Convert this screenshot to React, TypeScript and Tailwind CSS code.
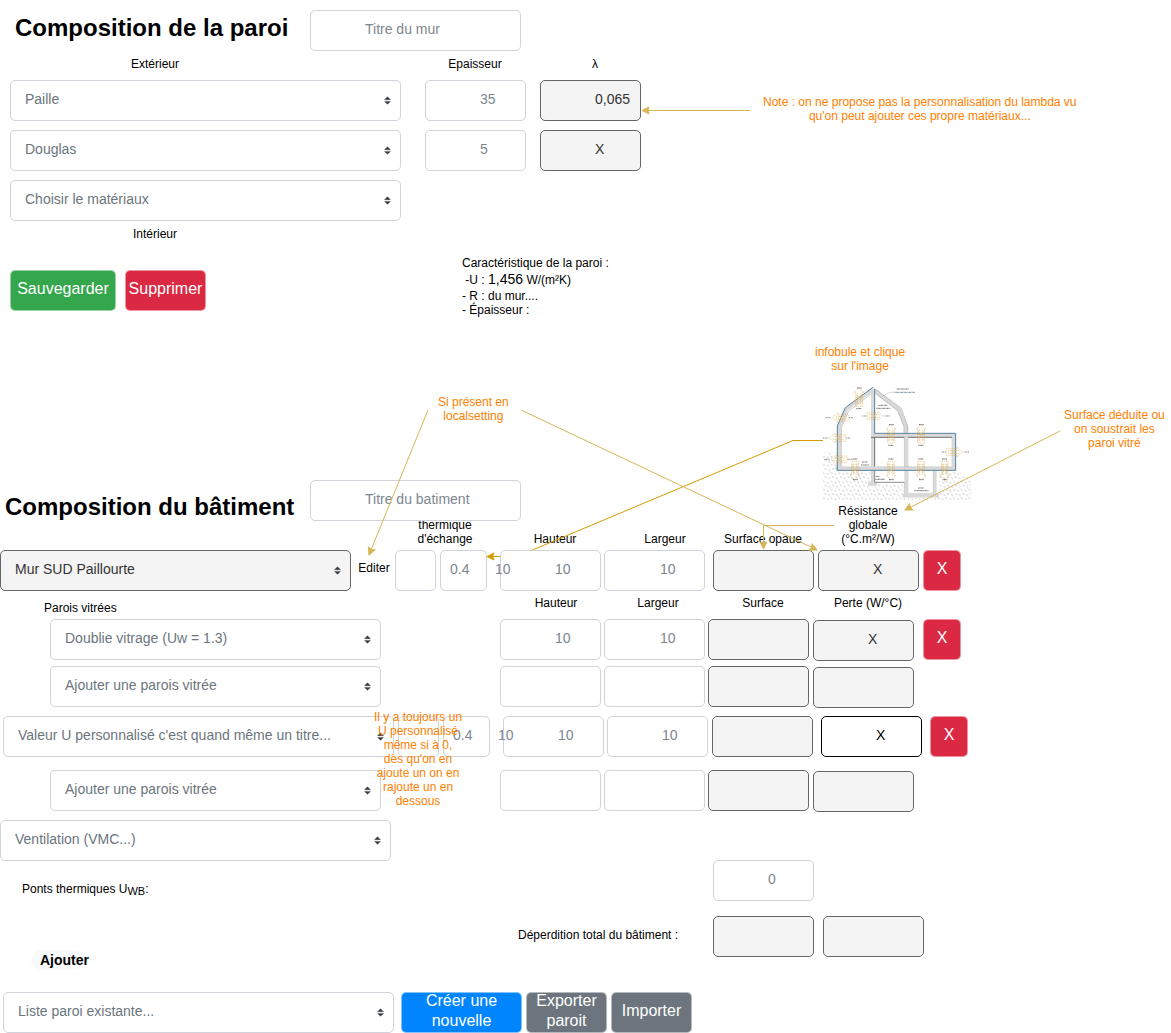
import React from "react";

const rose = "#D6B656";
const amber = "#D79B00";

function Caret() {
  return (
    <svg
      className="pointer-events-none absolute right-[10px] top-[16px] h-[9px] w-[7px]"
      viewBox="0 0 4 5"
      aria-hidden="true"
    >
      <path d="M2 .3 .3 2h3.4zM2 4.7.3 3h3.4z" fill="#343A40" stroke="#343A40" strokeWidth=".2" strokeLinejoin="round" />
    </svg>
  );
}

function Choice({ label, options, className = "", dark = false }: { label: string; options: string[]; className?: string; dark?: boolean }) {
  return (
    <div className={"relative h-[41px] shrink-0 " + className}>
      <select
        aria-label={label}
        className={
          "h-full w-full appearance-none rounded-[5px] border pb-1 pl-[14px] pr-6 text-sm " +
          (dark ? "border-[#666] bg-[#f4f4f4] text-[#333]" : "border-[#CED4DA] bg-white text-[#6C757D]")
        }
      >
        {options.map((o) => (
          <option key={o}>{o}</option>
        ))}
      </select>
      <Caret />
    </div>
  );
}

type Tone = "light" | "dark" | "black";

const tones: Record<Tone, string> = {
  light: "border-[#CED4DA] bg-white text-[#7D868E]",
  dark: "border-[#666] bg-[#f4f4f4] text-[#333]",
  black: "border-black bg-white text-black",
};

function Field({ label, id, value = "", tone = "light", className = "w-[101px] pl-[54px]" }: { label?: string; id?: string; value?: string; tone?: Tone; className?: string }) {
  return (
    <input
      id={id}
      aria-label={label}
      defaultValue={value}
      readOnly={tone !== "light"}
      className={"relative z-10 h-[41px] shrink-0 rounded-[5px] border pb-1 text-sm " + tones[tone] + " " + className}
    />
  );
}

function Action({ children, className }: { children: React.ReactNode; className: string }) {
  return (
    <button
      type="button"
      className={"relative z-10 flex h-[41px] shrink-0 items-center justify-center rounded-[5px] border bg-clip-padding pb-1 text-center text-base leading-5 text-white " + className}
    >
      {children}
    </button>
  );
}

const red = "border-[#DB2843]/50 bg-[#DB2843]";

function Note({ children, className }: { children: React.ReactNode; className: string }) {
  return <p className={"absolute z-20 whitespace-pre text-center leading-[14px] text-[#FF8000] " + className}>{children}</p>;
}

function Exchange({ className = "" }: { className?: string }) {
  return (
    <div className={"relative flex gap-[4px] " + className}>
      <Field label="Personnalisé" className="w-[41px]" />
      <Field label="Coefficient thermique d'échange" value="0.4" className="w-[47px] pl-[9px]" />
      <span className="absolute left-[100px] top-[9px] z-20 text-sm text-[#7D868E]">10</span>
    </div>
  );
}

function GlassRow({ option, filled = false, className = "" }: { option: string; filled?: boolean; className?: string }) {
  return (
    <div className={"flex items-start pl-[50px] " + className}>
      <Choice label="Paroi vitrée" options={[option]} className="w-[331px]" />
      <div className="ml-[119px] flex gap-[3px]">
        <Field label="Hauteur" value={filled ? "10" : ""} />
        <Field label="Largeur" value={filled ? "10" : ""} className="w-[101px] pl-[55px]" />
        <Field label="Surface" tone="dark" />
      </div>
      <div className="ml-[4px] mt-px">
        <Field label="Perte" tone="dark" value={filled ? "X" : ""} />
      </div>
      {filled && <Action className={"ml-[9px] w-[38px] " + red}>X</Action>}
    </div>
  );
}

function VArrow({ x, y, flip = false }: { x: number; y: number; flip?: boolean }) {
  return (
    <g transform={`translate(${x} ${y})${flip ? " scale(1 -1)" : ""}`}>
      <path d="M-10-24V18H-15L0 32 15 18H10V-24zM-5-18V16M5-18V16M-11-14H11M-10 2H10" fill="none" stroke="#D9A441" strokeWidth="2" strokeDasharray="4 2" opacity=".7" />
      <path d="M-8-10 8 12M8-10-8 12" stroke="#E3C27C" strokeWidth="2" />
      <path d="M-8-31H7M-6 31H8" stroke="#333" strokeWidth="3" strokeDasharray="3 1" opacity=".75" />
    </g>
  );
}

function HArrow({ x, y, flip = false }: { x: number; y: number; flip?: boolean }) {
  return (
    <g transform={`translate(${x} ${y})${flip ? " scale(-1 1)" : ""}`}>
      <path d="M22-10H-10V-15L-26 0-10 15V10H22zM-16-4H18M-16 4H18" fill="none" stroke="#D9A441" strokeWidth="2" strokeDasharray="4 2" opacity=".7" />
      <path d="M-9-7 9 7M9-7-9 7" stroke="#E3C27C" strokeWidth="2" />
      <path d="M-46 0H-30M24 0H36" stroke="#333" strokeWidth="3" strokeDasharray="3 2" opacity=".65" />
    </g>
  );
}

function House() {
  return (
    <svg className="absolute left-[815px] top-[380px] h-[125px] w-[160px]" viewBox="0 0 480 375" role="img" aria-label="Coupe du bâtiment">
      <defs>
        <pattern id="soil" width="23" height="25" patternUnits="userSpaceOnUse">
          <path d="M2 2l3 5M14 5l3 5M7 14l3 5M19 18l3 5" stroke="#999" strokeWidth="2" />
        </pattern>
      </defs>
      <path d="M24 218H66V272H170V312H265V352H372V272H422L468 300V360H24z" fill="url(#soil)" />
      <g fill="none" stroke="#D9D9D9" strokeWidth="10">
        <path d="M174 28 94 88 73 140V266H417V166H174M174 28 252 88 273 140V346M173 28V312M360 272V346" />
        <path d="M262 347H372M159 312H187" strokeWidth="11" />
        <path d="M61 266H70" />
      </g>
      <g fill="none" stroke="#555" strokeWidth="2.5">
        <path d="M168 172H268M279 172H411M179 172V260" />
        <path d="M179 272V307H268" strokeWidth="2" />
        <path d="M268 172V260M268 307V340M279 172V260M279 272V340H355V272M411 172V260M79 260H168M184 260H411" strokeWidth="1" stroke="#999" />
        <path d="M181 40 248 92 267 140V158M182 28 258 84 278 138V158" strokeWidth="1.5" stroke="#888" />
        <path d="M168 42 100 94 79 142V260" strokeWidth="1.5" stroke="#999" />
      </g>
      <path d="M174 22 91 83 67 138V271H422V160H179V26" fill="none" stroke="#54809F" strokeWidth="3" />
      <g stroke="#333" strokeWidth="3" strokeDasharray="3 1" opacity=".7">
        <path d="M245 27H282M190 76H218M184 85H226M141 246H158M138 255H162M182 289H194M181 298H210M309 324H326M298 332H340" />
        <path d="M238 37H300" stroke="#34566F" />
      </g>
      <path d="M205 47 222 38 238 36" fill="none" stroke="#777" strokeWidth="1.5" strokeDasharray="3 3" />
      <VArrow x={132} y={55} flip />
      <VArrow x={228} y={165} flip />
      <VArrow x={318} y={165} flip />
      <VArrow x={120} y={268} />
      <VArrow x={228} y={268} />
      <VArrow x={318} y={268} />
      <VArrow x={389} y={268} />
      <HArrow x={78} y={113} />
      <HArrow x={178} y={108} flip />
      <HArrow x={70} y={174} />
      <HArrow x={74} y={238} />
      <HArrow x={416} y={216} flip />
    </svg>
  );
}

function Arrows() {
  return (
    <>
      <svg className="pointer-events-none absolute left-0 top-0 h-[600px] w-[1171px]" viewBox="0 0 1171 600" aria-hidden="true">
        <path d="M823 440.500H793L517 556.500H492" fill="none" stroke={amber} />
        <path d="M487 556.500l7-3.500-1.500 3.500 1.500 3.500z" fill={amber} stroke={amber} />
      </svg>
      <svg className="pointer-events-none absolute left-0 top-0 z-20 h-[600px] w-[1171px]" viewBox="0 0 1171 600" aria-hidden="true">
        <g fill="none" stroke={rose}>
          <path d="M750 110.500H647" />
          <path d="M428 410 371 550" />
          <path d="M521 410 813 548" />
          <path d="M834 525.500H763.500V545" />
          <path d="M1060 431 909 508" />
        </g>
        <g fill={rose} stroke={rose}>
          <path d="M642 110.500l7-3.500-1 3.500 1 3.500z" />
          <path d="M0 0l7-3.500-1 3.500 1 3.500z" transform="translate(369 555) rotate(-68)" />
          <path d="M0 0l7-3.500-1 3.500 1 3.500z" transform="translate(817 550) rotate(205)" />
          <path d="M0 0l7-3.500-1 3.500 1 3.500z" transform="translate(763.5 549) rotate(-90)" />
          <path d="M0 0l7-3.500-1 3.500 1 3.500z" transform="translate(905 510) rotate(-27)" />
        </g>
      </svg>
    </>
  );
}

export default function App() {
  return (
    <main className="relative min-h-screen overflow-hidden bg-white font-['Liberation_Sans',Arial,sans-serif] text-xs text-black">
      <section className="pt-[10px]">
        <div className="flex items-center pl-[15px]">
          <h1 className="w-[295px] pb-1.5 text-2xl font-bold">Composition de la paroi</h1>
          <Field label="Titre du mur" value="Titre du mur" className="w-[211px] pl-[54px]" />
        </div>
        <div className="flex h-[29px] items-center pb-1 pl-[10px] text-center">
          <span className="w-[290px]">Extérieur</span>
          <span className="ml-[115px] w-[120px]">Epaisseur</span>
          <span className="w-[120px]">λ</span>
        </div>
        <div className="flex flex-col gap-[9px] pl-[10px]">
          <div className="flex">
            <Choice label="Matériau 1" options={["Paille"]} className="w-[391px]" />
            <div className="ml-6 flex gap-[14px]">
              <Field label="Epaisseur" value="35" />
              <Field label="Lambda" value="0,065" tone="dark" />
            </div>
          </div>
          <div className="flex">
            <Choice label="Matériau 2" options={["Douglas"]} className="w-[391px]" />
            <div className="ml-6 flex gap-[14px]">
              <Field label="Epaisseur" value="5" />
              <Field label="Lambda" value="X" tone="dark" />
            </div>
          </div>
          <Choice label="Matériau 3" options={["Choisir le matériaux"]} className="w-[391px]" />
        </div>
        <div className="flex h-[96px] pl-[10px]">
          <div className="w-[452px]">
            <p className="w-[290px] pt-1 text-center leading-[18px]">Intérieur</p>
            <div className="mt-[27px] flex gap-[9px]">
              <Action className="w-[106px] border-[#34A64C]/50 bg-[#34A64C]">Sauvegarder</Action>
              <Action className={"w-[81px] " + red}>Supprimer</Action>
            </div>
          </div>
          <div className="whitespace-pre pt-[35px] leading-[14px]">
            <p>Caractéristique de la paroi :</p>
            <p className="leading-[18px]">
              {" "}-U : <span className="text-sm leading-[18px]">1,456</span> W/(m²K)
            </p>
            <p>- R : du mur....</p>
            <p>- Épaisseur :</p>
          </div>
        </div>
      </section>

      <section className="pt-[163px]">
        <div className="flex items-end pl-[5px]">
          <h2 className="w-[305px] text-2xl leading-7 font-bold">Composition du bâtiment</h2>
          <Field label="Titre du batiment" value="Titre du batiment" className="w-[211px] pl-[54px]" />
        </div>
        <div className="flex h-[29px] items-end pb-1 pl-[390px] text-center leading-[14px]">
          <span className="w-[110px]">thermique<br />d'échange</span>
          <span className="w-[110px]">Hauteur</span>
          <span className="w-[110px]">Largeur</span>
          <span className="w-[86px]">Surface opaue</span>
          <span className="w-[124px]">Résistance<br />globale<br />(°C.m²/W)</span>
        </div>
        <div className="flex">
          <Choice dark label="Paroi" options={["Mur SUD Paillourte"]} className="w-[351px]" />
          <a href="#editer" className="w-[44px] pl-[2px] text-center leading-[37px]">Editer</a>
          <Exchange />
          <div className="ml-[13px] flex gap-[3px]">
            <Field label="Hauteur" value="10" />
            <Field label="Largeur" value="10" className="w-[101px] pl-[55px]" />
          </div>
          <div className="ml-[8px] flex gap-[4px]">
            <Field label="Surface opaque" tone="dark" />
            <Field label="Résistance globale" tone="dark" value="X" />
            <Action className={"w-[38px] " + red}>X</Action>
          </div>
        </div>
        <div className="flex h-[28px] items-center pb-1 pl-[44px] text-center">
          <span className="w-[456px] pt-2.5 text-left">Parois vitrées</span>
          <span className="w-[112px]">Hauteur</span>
          <span className="w-[92px]">Largeur</span>
          <span className="w-[118px]">Surface</span>
          <span className="w-[92px]">Perte (W/°C)</span>
        </div>
        <GlassRow filled option="Doublie vitrage (Uw = 1.3)" />
        <GlassRow option="Ajouter une parois vitrée" className="mt-[5px]" />
        <div className="mt-[8px] flex pl-[3px]">
          <Choice label="Paroi personnalisée" options={["Valeur U personnalisé c'est quand même un titre..."]} className="w-[391px]" />
          <Exchange className="ml-[4px]" />
          <div className="ml-[13px] flex gap-[3px]">
            <Field label="Hauteur" value="10" />
            <Field label="Largeur" value="10" className="w-[101px] pl-[54px]" />
          </div>
          <div className="ml-[4px] flex gap-[8px]">
            <Field label="Surface" tone="dark" />
            <Field label="Perte" tone="black" value="X" />
            <Action className={"w-[38px] " + red}>X</Action>
          </div>
        </div>
        <GlassRow option="Ajouter une parois vitrée" className="mt-[13px]" />
        <Choice label="Ventilation" options={["Ventilation (VMC...)"]} className="mt-[8px] w-[391px]" />
        <div className="-mt-px flex items-center pl-[22px]">
          <label htmlFor="ponts" className="w-[691px] pt-4">
            Ponts thermiques U<sub className="text-[11px]">WB</sub>:
          </label>
          <Field id="ponts" value="0" />
        </div>
        <div className="mt-[15px] flex items-center pl-[518px]">
          <span className="w-[195px] pb-1">Déperdition total du bâtiment :</span>
          <div className="flex gap-[9px]">
            <Field label="Surface totale" tone="dark" />
            <Field label="Perte totale" tone="dark" />
          </div>
        </div>
      </section>

      <section className="-mt-[7px]">
        <h3 className="ml-[31px] w-[54px] whitespace-nowrap rounded-full bg-[#F8F9FA] pl-[9px] text-sm leading-5 font-bold">Ajouter</h3>
        <div className="mt-[22px] flex pl-[3px]">
          <Choice label="Liste des parois" options={["Liste paroi existante..."]} className="w-[391px]" />
          <div className="ml-[7px] flex gap-[4px]">
            <Action className="w-[121px] border-[#0085FF]/50 bg-[#0085FF]">Créer une<br />nouvelle</Action>
            <Action className="w-[81px] border-[#6C757D]/50 bg-[#6C757D]">Exporter<br />paroit</Action>
            <Action className="w-[81px] border-[#6C757D]/50 bg-[#6C757D]">Importer</Action>
          </div>
        </div>
      </section>

      <House />
      <Arrows />
      <Note className="left-[763px] top-[95px]">{"Note : on ne propose pas la personnalisation du lambda vu\nqu'on peut ajouter ces propre matériaux..."}</Note>
      <Note className="left-[815px] top-[345px]">{"infobule et clique\nsur l'image"}</Note>
      <Note className="left-[438px] top-[395px]">{"Si présent en\nlocalsetting"}</Note>
      <Note className="left-[1064px] top-[408px]">{"Surface déduite ou\non soustrait les\nparoi vitré"}</Note>
      <Note className="left-[374px] top-[710px]">{"Il y a toujours un\nU personnalisé\nmême si à 0,\ndès qu'on en\najoute un on en\nrajoute un en\ndessous"}</Note>
    </main>
  );
}
